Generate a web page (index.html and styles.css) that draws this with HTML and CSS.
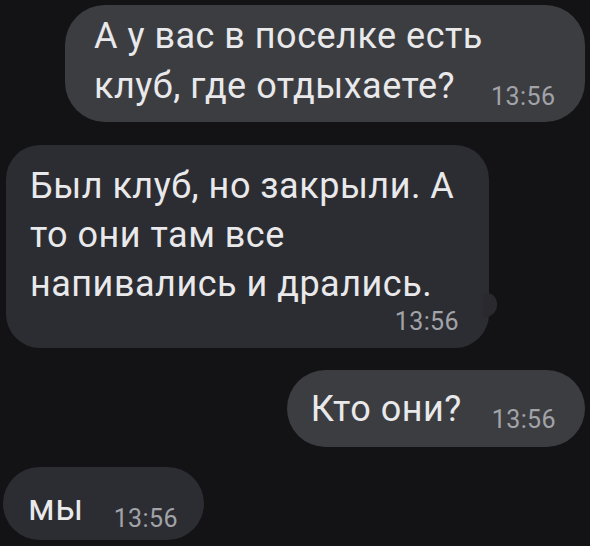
FILE: index.html
```html
<!DOCTYPE html>
<html lang="ru">
<head>
    <meta charset="UTF-8">
    <meta name="viewport" content="width=device-width, initial-scale=1.0">
    <title>чат</title>
    <link rel="stylesheet" href="styles.css">
</head>
<body>
    <div class="chat">
        <div class="msg out first">
            А у вас в поселке есть<br>
            клуб, где отдыхаете?<span class="time">13:56</span>
        </div>
        <div class="msg in second">
            <div class="text">
                Был клуб, но закрыли. А<br>
                то они там все<br>
                напивались и дрались.
            </div>
            <div class="time own">13:56</div>
        </div>
        <div class="msg out third">
            Кто они?<span class="time">13:56</span>
        </div>
        <div class="msg in fourth">
            мы<span class="time">13:56</span>
        </div>
    </div>
</body>
</html>
```

FILE: styles.css
```css
body{
    margin: 0;
    padding: 0;
    background: #131215;
    font-family: Roboto, "Liberation Sans", sans-serif;
}
.chat{
    display: flex;
    flex-direction: column;
    align-items: flex-start;
    padding: 5px 5px 0 3px;
    height: 546px;
    box-sizing: border-box;
    overflow: hidden;
}
.msg{
    font-size: 36px;
    letter-spacing: 0.5px;
    line-height: 50px;
    color: #e9e9eb;
    white-space: nowrap;
    box-sizing: border-box;
}
.out{
    align-self: flex-end;
    background: #3c3d41;
}
.in{
    background: #2c2d32;
}
.time{
    display: inline-block;
    font-size: 25px;
    letter-spacing: 0.4px;
    line-height: 20px;
    color: #a2a3a8;
    margin-left: 30px;
    vertical-align: -7px;
}
.first{
    width: 520px;
    padding: 6px 24px 11px 29px;
    border-radius: 40px;
}
.first .time{
    margin-left: 36px;
}
.second{
    position: relative;
    margin-top: 23px;
    margin-left: 3px;
    width: 483px;
    padding: 17px 30px 13px 24px;
    border-radius: 34px;
}
.second .text{
    line-height: 49px;
}
.second .own{
    display: block;
    margin: 0;
    text-align: right;
    line-height: 26px;
    vertical-align: baseline;
}
.second::after{
    content: "";
    position: absolute;
    right: -8px;
    top: 148px;
    width: 14px;
    height: 24px;
    background: #29292e;
    border-radius: 0 10px 12px 0;
}
.third{
    margin-top: 22px;
    padding: 14px 29px 13px 24px;
    border-radius: 39px;
}
.fourth{
    margin-top: 20px;
    padding: 16px 26px 7px 25px;
    border-radius: 37px;
}
```
